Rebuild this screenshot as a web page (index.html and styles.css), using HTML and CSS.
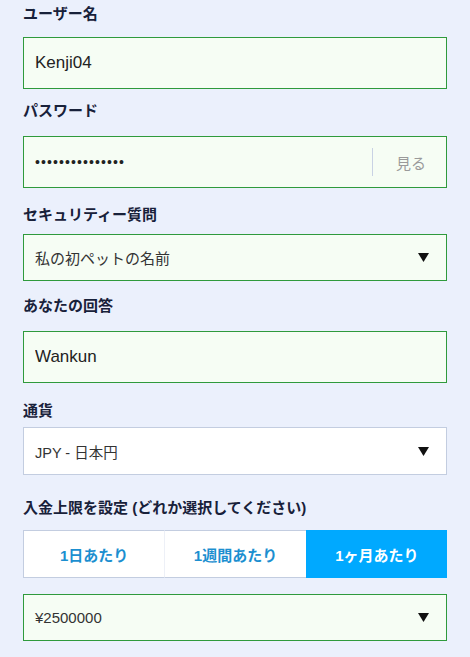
FILE: index.html
```html
<!DOCTYPE html>
<html lang="ja">
<head>
<meta charset="UTF-8">
<meta name="viewport" content="width=device-width, initial-scale=1.0">
<title>アカウント登録</title>
<link rel="stylesheet" href="styles.css">
</head>
<body>

<form class="signup">
  <div class="field first">
    <label class="label" for="username">ユーザー名</label>
    <div class="box ok tall">
      <input class="text" type="text" id="username" value="Kenji04">
    </div>
  </div>

  <div class="field gap-pw">
    <label class="label" for="password">パスワード</label>
    <div class="box ok tall">
      <input class="text dots" type="password" id="password" value="passwordpasswor">
      <span class="divider"></span>
      <button type="button" class="show">見る</button>
    </div>
  </div>

  <div class="field gap-sec">
    <label class="label" for="question">セキュリティー質問</label>
    <div class="box ok">
      <span class="value" id="question">私の初ペットの名前</span>
      <svg class="arrow" width="11" height="9" viewBox="0 0 11 9"><path d="M0 0H11L5.5 9Z" fill="#111"/></svg>
    </div>
  </div>

  <div class="field gap-ans">
    <label class="label" for="answer">あなたの回答</label>
    <div class="box ok tall">
      <input class="text" type="text" id="answer" value="Wankun">
    </div>
  </div>

  <div class="field gap-cur">
    <label class="label" for="currency">通貨</label>
    <div class="box plain">
      <span class="value" id="currency">JPY - 日本円</span>
      <svg class="arrow" width="11" height="9" viewBox="0 0 11 9"><path d="M0 0H11L5.5 9Z" fill="#111"/></svg>
    </div>
  </div>

  <div class="field gap-dep">
    <label class="label">入金上限を設定 (どれか選択してください)</label>
    <div class="tabs">
      <button type="button" class="tab">1日あたり</button>
      <button type="button" class="tab">1週間あたり</button>
      <button type="button" class="tab active">1ヶ月あたり</button>
    </div>
    <div class="box ok limit">
      <span class="value">¥2500000</span>
      <svg class="arrow" width="11" height="9" viewBox="0 0 11 9"><path d="M0 0H11L5.5 9Z" fill="#111"/></svg>
    </div>
  </div>
</form>

</body>
</html>
```

FILE: styles.css
```css
body {
  margin: 0;
  background-color: #ebf0fc;
  font-family: "Liberation Sans", "Noto Sans CJK JP", sans-serif;
  color: #222;
}
.signup {
  width: 424px;
  margin-left: 23px;
  padding-top: 4px;
}
.field {
  display: flex;
  flex-direction: column;
}
.label {
  font-size: 15px;
  font-weight: bold;
  color: #18213a;
  line-height: 20px;
  margin-bottom: 13px;
}
.gap-pw { margin-top: 12px; }
.gap-pw .label { margin-bottom: 15px; }
.gap-sec { margin-top: 17px; }
.gap-sec .label { margin-bottom: 9px; }
.gap-ans { margin-top: 15px; }
.gap-ans .label { margin-bottom: 15px; }
.gap-cur { margin-top: 18px; }
.gap-cur .label { margin-bottom: 6px; }
.gap-dep { margin-top: 23px; }
.gap-dep .label { margin-bottom: 12px; }

.box {
  display: flex;
  align-items: center;
  height: 47px;
  box-sizing: border-box;
  border: 1px solid #c3cde0;
  background: #fff;
  padding: 0 12px 0 11px;
}
.box.tall { height: 52px; }
.box.plain { height: 48px; }
.box.ok {
  border-color: #2f9a3c;
  background: #f6fdf4;
}
.text {
  flex: 1;
  border: none;
  background: transparent;
  font: inherit;
  font-size: 17px;
  color: #222;
  padding: 0;
  outline: none;
}
.dots {
  font-size: 14px;
  letter-spacing: 1.1px;
}
.divider {
  width: 1px;
  height: 28px;
  background: #c9d2e4;
  margin: 0 23px 0 10px;
}
.show {
  border: none;
  background: none;
  font: inherit;
  font-size: 15px;
  color: #9a9a9a;
  padding: 0;
  margin-right: 8px;
}
.value {
  flex: 1;
  font-size: 15px;
  color: #333;
}
.plain .value { font-size: 14.5px; }
.arrow {
  margin-right: 5px;
}
.tabs {
  display: flex;
  height: 48px;
  margin-bottom: 16px;
}
.tab {
  flex: 1;
  border: 1px solid #c3cde0;
  border-width: 1px 0;
  background: #fff;
  font: inherit;
  font-size: 15px;
  font-weight: bold;
  color: #1c8fd0;
  cursor: pointer;
}
.tab:first-child { border-left: 1px solid #c3cde0; }
.tab + .tab { border-left: 1px solid #edf0f7; }
.tab.active {
  background: #00a9ff;
  border-color: #00a9ff;
  color: #fff;
}
```
